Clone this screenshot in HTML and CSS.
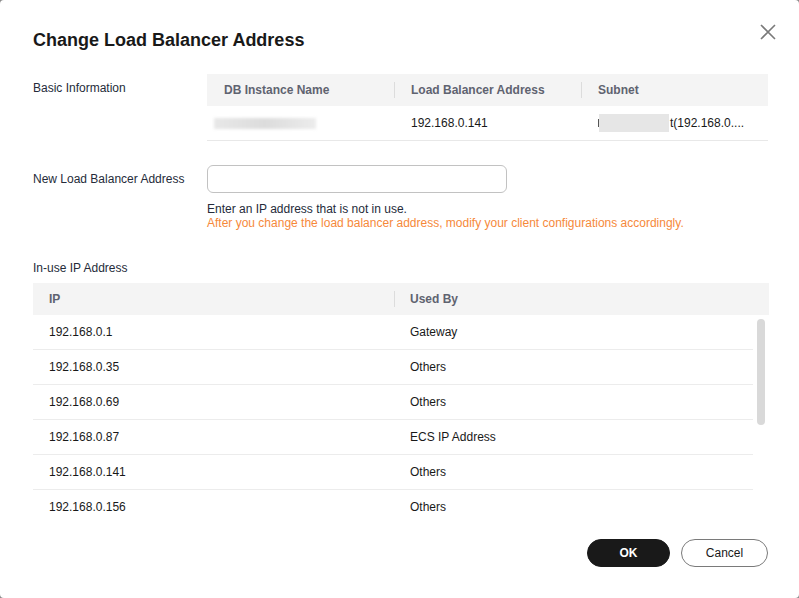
FILE: index.html
```html
<!DOCTYPE html>
<html>
<head>
<meta charset="utf-8">
<link rel="stylesheet" href="styles.css">
</head>
<body>
<div class="dialog">
  <h1 class="title">Change Load Balancer Address</h1>
  <button class="close" aria-label="Close">
    <svg width="16" height="16" viewBox="0 0 16 16"><path d="M1 1L15 15M15 1L1 15" stroke="#7a7a7a" stroke-width="1.6" fill="none"/></svg>
  </button>

  <div class="form-row basic">
    <div class="label">Basic Information</div>
    <div class="info-table">
      <div class="info-head">
        <div class="cell">DB Instance Name</div>
        <div class="cell sep">Load Balancer Address</div>
        <div class="cell sep">Subnet</div>
      </div>
      <div class="info-body">
        <div class="cell first"><span class="blur name-blur"></span></div>
        <div class="cell">192.168.0.141</div>
        <div class="cell subnet"><span class="tick"></span><span class="blur subnet-blur"></span><span>t(192.168.0....</span></div>
      </div>
    </div>
  </div>

  <div class="form-row newaddr">
    <div class="label tall">New Load Balancer Address</div>
    <div class="field">
      <input class="input" type="text">
      <div class="hint">Enter an IP address that is not in use.</div>
      <div class="warn">After you change the load balancer address, modify your client configurations accordingly.</div>
    </div>
  </div>

  <div class="section-label">In-use IP Address</div>
  <div class="ip-table">
    <div class="ip-head">
      <div class="col-ip">IP</div>
      <div class="col-used sep">Used By</div>
    </div>
    <div class="ip-body">
      <div class="rows">
        <div class="row"><div class="col-ip">192.168.0.1</div><div class="col-used">Gateway</div></div>
        <div class="row"><div class="col-ip">192.168.0.35</div><div class="col-used">Others</div></div>
        <div class="row"><div class="col-ip">192.168.0.69</div><div class="col-used">Others</div></div>
        <div class="row"><div class="col-ip">192.168.0.87</div><div class="col-used">ECS IP Address</div></div>
        <div class="row"><div class="col-ip">192.168.0.141</div><div class="col-used">Others</div></div>
        <div class="row"><div class="col-ip">192.168.0.156</div><div class="col-used">Others</div></div>
      </div>
      <div class="track"><div class="thumb"></div></div>
    </div>
  </div>

  <div class="footer">
    <button class="btn ok">OK</button>
    <button class="btn cancel">Cancel</button>
  </div>
</div>
</body>
</html>
```

FILE: styles.css
```css
* { box-sizing: border-box; }
html, body {
  margin: 0;
  padding: 0;
  background: #8a8a8a;
}
body {
  font-family: "Liberation Sans", Arial, sans-serif;
  font-size: 12px;
  color: #191919;
}
.dialog {
  position: relative;
  width: 799px;
  height: 598px;
  background: #fff;
  border-radius: 4px;
  padding: 28px 31px 0 33px;
  overflow: hidden;
}
.title {
  margin: 0;
  font-size: 18px;
  line-height: 24px;
  font-weight: bold;
  color: #191919;
}
.close {
  position: absolute;
  top: 24px;
  right: 23px;
  width: 16px;
  height: 16px;
  padding: 0;
  border: 0;
  background: none;
  display: block;
}
.close svg { display: block; }

.form-row {
  display: grid;
  grid-template-columns: 174px 1fr;
}
.basic { margin-top: 22px; }
.label {
  color: #252b3a;
  line-height: 18px;
  padding-top: 5px;
}
.label.tall {
  padding-top: 0;
  line-height: 28px;
}

.info-head, .info-body {
  display: grid;
  grid-template-columns: 187px 187px 187px;
}
.info-head {
  height: 32px;
  background: #f4f4f4;
  color: #5f6370;
  font-weight: bold;
}
.info-head .cell {
  line-height: 32px;
  padding-left: 17px;
  position: relative;
}
.sep::before {
  content: "";
  position: absolute;
  left: 0;
  top: 8px;
  width: 1px;
  height: 16px;
  background: #dcdcdc;
}
.info-body {
  height: 35px;
  border-bottom: 1px solid #e8e8e8;
}
.info-body .cell {
  padding-left: 17px;
  display: flex;
  align-items: center;
}
.info-body .cell.first { padding-left: 7px; }
.blur {
  display: inline-block;
  background: #e2e2e2;
  filter: blur(1.5px);
}
.name-blur {
  width: 102px;
  height: 11px;
  background: linear-gradient(90deg, #e8e8e8, #dcdcdc 50%, #ececec);
}
.subnet-blur {
  width: 70px;
  height: 18px;
  background: #e6e6e6;
  filter: blur(0.5px);
  margin-right: 1px;
}
.info-body .cell.subnet { padding-left: 17px; }
.tick {
  display: inline-block;
  width: 1px;
  height: 8px;
  background: #555;
}

.newaddr { margin-top: 24px; }
.input {
  display: block;
  width: 300px;
  height: 28px;
  border: 1px solid #c2c2c2;
  border-radius: 6px;
  background: #fff;
  margin: 0;
  outline: none;
}
.hint {
  margin-top: 9px;
  line-height: 14px;
  color: #252b3a;
}
.warn {
  line-height: 14px;
  color: #f6893a;
}

.section-label {
  margin-top: 29px;
  line-height: 18px;
  color: #252b3a;
}
.ip-table {
  margin-top: 6px;
  width: 736px;
}
.ip-head {
  display: flex;
  height: 32px;
  background: #f4f4f4;
  color: #5f6370;
  font-weight: bold;
  line-height: 32px;
}
.col-ip {
  width: 361px;
  padding-left: 16px;
  flex: none;
}
.col-used {
  flex: 1;
  padding-left: 16px;
  position: relative;
}
.ip-body {
  display: flex;
  height: 209px;
  overflow: hidden;
}
.rows {
  width: 720px;
  flex: none;
}
.row {
  display: flex;
  height: 35px;
  line-height: 34px;
  border-bottom: 1px solid #ececec;
  color: #191919;
}
.row:last-child { border-bottom: 0; }
.track {
  width: 16px;
  flex: none;
  padding: 4px 4px 0 4px;
}
.thumb {
  width: 8px;
  height: 106px;
  background: #d9d9d9;
  border-radius: 4px;
}

.footer {
  display: flex;
  justify-content: flex-end;
  gap: 11px;
  margin-top: 15px;
  width: 735px;
}
.btn {
  height: 28px;
  border-radius: 14px;
  font-family: "Liberation Sans", Arial, sans-serif;
  font-size: 12px;
  padding: 0;
  margin: 0;
}
.ok {
  width: 83px;
  background: #191919;
  color: #fff;
  border: 1px solid #191919;
  font-weight: bold;
}
.cancel {
  width: 87px;
  background: #fff;
  color: #191919;
  border: 1px solid #7a7a7a;
}
```
